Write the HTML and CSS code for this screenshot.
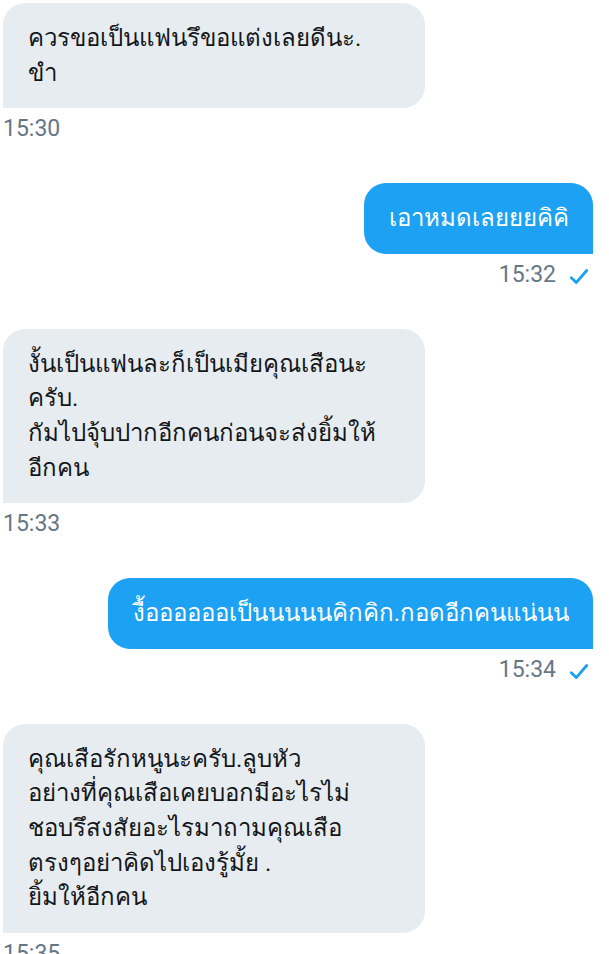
FILE: index.html
```html
<!DOCTYPE html>
<html lang="th">
<head>
    <meta charset="UTF-8">
    <meta name="viewport" content="width=device-width, initial-scale=1.0">
    <title>Messages</title>
    <link rel="stylesheet" href="styles.css">
</head>
<body>
    <div class="chat">
        <div class="msg received">
            <div class="bubble">ควรขอเป็นแฟนรึขอแต่งเลยดีนะ.<br>ขำ</div>
            <div class="meta">15:30</div>
        </div>

        <div class="msg sent">
            <div class="bubble">เอาหมดเลยยยคิคิ</div>
            <div class="meta">15:32
                <svg class="check" viewBox="0 0 20 20"><path d="M3 11.5l4.5 4.5L17 5"/></svg>
            </div>
        </div>

        <div class="msg received">
            <div class="bubble">งั้นเป็นแฟนละก็เป็นเมียคุณเสือนะ<br>ครับ.<br>กัมไปจุ้บปากอีกคนก่อนจะส่งยิ้มให้<br>อีกคน</div>
            <div class="meta">15:33</div>
        </div>

        <div class="msg sent">
            <div class="bubble">งื้ออออออเป็นนนนนคิกคิก.กอดอีกคนแน่นน</div>
            <div class="meta">15:34
                <svg class="check" viewBox="0 0 20 20"><path d="M3 11.5l4.5 4.5L17 5"/></svg>
            </div>
        </div>

        <div class="msg received">
            <div class="bubble">คุณเสือรักหนูนะครับ.ลูบหัว<br>อย่างที่คุณเสือเคยบอกมีอะไรไม่<br>ชอบรึสงสัยอะไรมาถามคุณเสือ<br>ตรงๆอย่าคิดไปเองรู้มั้ย .<br>ยิ้มให้อีกคน</div>
            <div class="meta">15:35</div>
        </div>
    </div>
</body>
</html>
```

FILE: styles.css
```css
body {
    margin: 0;
    padding: 0;
    background-color: #fff;
    font-family: Roboto, "Noto Sans", sans-serif;
    color: #14171a;
}

.chat {
    display: flex;
    flex-direction: column;
    gap: 40px;
    padding: 3px 16px 0 3px;
}

.msg {
    display: flex;
    flex-direction: column;
}

.msg.received {
    align-items: flex-start;
}

.msg.sent {
    align-items: flex-end;
}

.bubble {
    font-size: 24px;
    line-height: 34.6px;
    padding: 18px 24px 18px 25px;
    border-radius: 22px;
}

.received .bubble {
    width: 422px;
    box-sizing: border-box;
    background-color: #e6ecf0;
    border-bottom-left-radius: 0;
}

.sent .bubble {
    background-color: #1da1f2;
    color: #fff;
    border-bottom-right-radius: 0;
}

.meta {
    display: flex;
    align-items: center;
    gap: 12px;
    margin-top: 7px;
    font-size: 23px;
    line-height: 28px;
    color: #657786;
}

.sent .meta {
    padding-right: 3px;
}

.check {
    width: 22px;
    height: 22px;
    margin-top: 3px;
    fill: none;
    stroke: #1da1f2;
    stroke-width: 2.6;
    stroke-linecap: round;
    stroke-linejoin: round;
}
```
